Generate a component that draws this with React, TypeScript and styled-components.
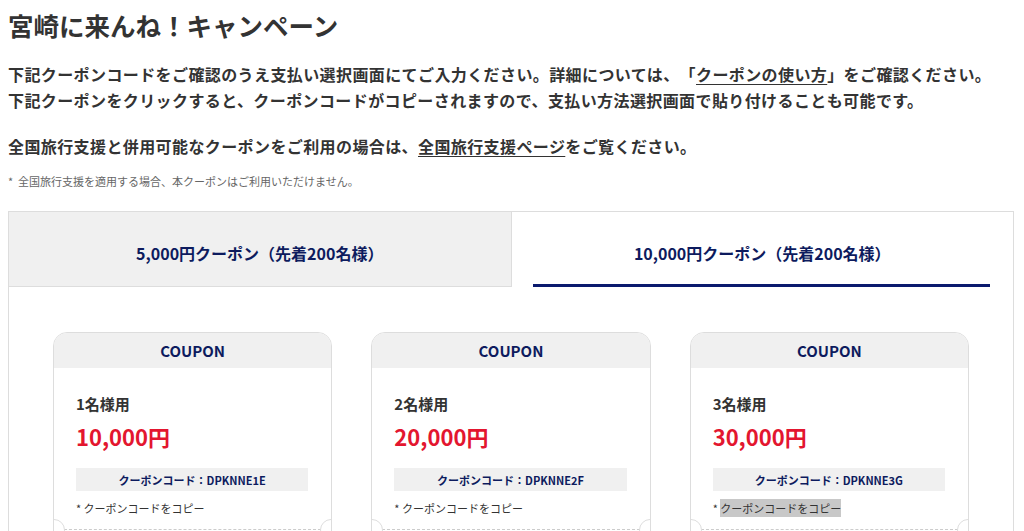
import React from "react";
import styled, { createGlobalStyle } from "styled-components";

const GlobalStyle = createGlobalStyle`
  body {
    margin: 0;
    background: #fff;
    font-family: "Noto Sans CJK JP", "Noto Sans", sans-serif;
    color: #333;
    text-spacing-trim: space-all;
  }
`;

const Page = styled.div`
  padding: 0 8px;
`;

const Title = styled.h1`
  margin: 5px 0 0;
  font-size: 25.5px;
  line-height: 39px;
  font-weight: 700;
  color: #333;
`;

const Lead = styled.p<{ $gap?: number }>`
  margin: ${(p) => p.$gap ?? 18}px 0 0;
  font-size: 16px;
  line-height: 25.6px;
  font-weight: 700;
  letter-spacing: 0.4px;
  color: #333;
`;

const Link = styled.a`
  color: #333;
  text-decoration: underline;
  text-underline-offset: 3px;
`;

const Note = styled.p`
  margin: 13px 0 0;
  font-size: 11px;
  line-height: 17.6px;
  color: #666;
`;

const TabBox = styled.div`
  margin-top: 21px;
  width: 1006px;
  box-sizing: border-box;
  border: 1px solid #ddd;
`;

const TabRow = styled.div`
  display: flex;
`;

const Tab = styled.div<{ $active?: boolean }>`
  position: relative;
  flex: 1;
  height: 75px;
  box-sizing: border-box;
  padding-top: 7px;
  display: flex;
  align-items: center;
  justify-content: center;
  font-size: 16px;
  font-weight: 700;
  color: #0d1b5e;
  background: ${(p) => (p.$active ? "#fff" : "#f0f0f0")};
  border-bottom: ${(p) => (p.$active ? "1px solid transparent" : "1px solid #ddd")};
  border-right: ${(p) => (p.$active ? "none" : "1px solid #ddd")};

  &::after {
    content: "";
    display: ${(p) => (p.$active ? "block" : "none")};
    position: absolute;
    left: 21px;
    right: 23px;
    bottom: -1px;
    height: 3px;
    background: #0a1a6e;
  }
`;

const CardGrid = styled.div`
  display: flex;
  gap: 39px;
  padding: 45px 44px 40px;
`;

const Card = styled.div`
  flex: 1;
  border: 1px solid #ddd;
  border-radius: 14px;
  overflow: hidden;
  background: #fff;
`;

const CardHead = styled.div`
  height: 35px;
  background: #f0f0f0;
  display: flex;
  align-items: center;
  justify-content: center;
  font-size: 15px;
  font-weight: 700;
  color: #0d1b5e;
`;

const CardBody = styled.div`
  padding: 24px 23px 11px 22px;
`;

const People = styled.div`
  font-size: 15px;
  line-height: 24px;
  font-weight: 700;
  color: #333;
`;

const Price = styled.div`
  margin-top: 4px;
  font-size: 22px;
  line-height: 33px;
  font-weight: 700;
  color: #e3162f;
`;

const CodeBox = styled.div`
  margin-top: 15px;
  height: 23px;
  background: #f0f0f0;
  display: flex;
  align-items: center;
  justify-content: center;
  font-size: 11px;
  font-weight: 700;
  color: #0d1b5e;
`;

const Copy = styled.div`
  margin-top: 9px;
  font-size: 11px;
  line-height: 17.6px;
  color: #333;
`;

const Selected = styled.span<{ $on?: boolean }>`
  background: ${(p) => (p.$on ? "#c8c8c8" : "transparent")};
  padding: 1px 0;
`;

const Perforation = styled.div`
  position: relative;
  margin: 0 10px;
  border-top: 1px dashed #ccc;

  &::before,
  &::after {
    content: "";
    position: absolute;
    top: -11px;
    width: 20px;
    height: 20px;
    border-radius: 50%;
    border: 1px solid #ddd;
    background: #fff;
  }
  &::before {
    left: -21px;
  }
  &::after {
    right: -21px;
  }
`;

const Stub = styled.div`
  height: 40px;
`;

const coupons = [
  { people: "1名様用", price: "10,000円", code: "DPKNNE1E" },
  { people: "2名様用", price: "20,000円", code: "DPKNNE2F" },
  { people: "3名様用", price: "30,000円", code: "DPKNNE3G" },
];

export default function App() {
  return (
    <Page>
      <GlobalStyle />
      <Title>宮崎に来んね！キャンペーン</Title>
      <Lead>
        下記クーポンコードをご確認のうえ支払い選択画面にてご入力ください。詳細については、「
        <Link>クーポンの使い方</Link>」をご確認ください。
        <br />
        下記クーポンをクリックすると、クーポンコードがコピーされますので、支払い方法選択画面で貼り付けることも可能です。
      </Lead>
      <Lead $gap={21}>
        全国旅行支援と併用可能なクーポンをご利用の場合は、
        <Link>全国旅行支援ページ</Link>をご覧ください。
      </Lead>
      <Note>*&nbsp; 全国旅行支援を適用する場合、本クーポンはご利用いただけません。</Note>
      <TabBox>
        <TabRow>
          <Tab>5,000円クーポン（先着200名様）</Tab>
          <Tab $active>10,000円クーポン（先着200名様）</Tab>
        </TabRow>
        <CardGrid>
          {coupons.map((c, i) => (
            <Card key={c.code}>
              <CardHead>COUPON</CardHead>
              <CardBody>
                <People>{c.people}</People>
                <Price>{c.price}</Price>
                <CodeBox>クーポンコード：{c.code}</CodeBox>
                <Copy>
                  * <Selected $on={i === 2}>クーポンコードをコピー</Selected>
                </Copy>
              </CardBody>
              <Perforation />
              <Stub />
            </Card>
          ))}
        </CardGrid>
      </TabBox>
    </Page>
  );
}
